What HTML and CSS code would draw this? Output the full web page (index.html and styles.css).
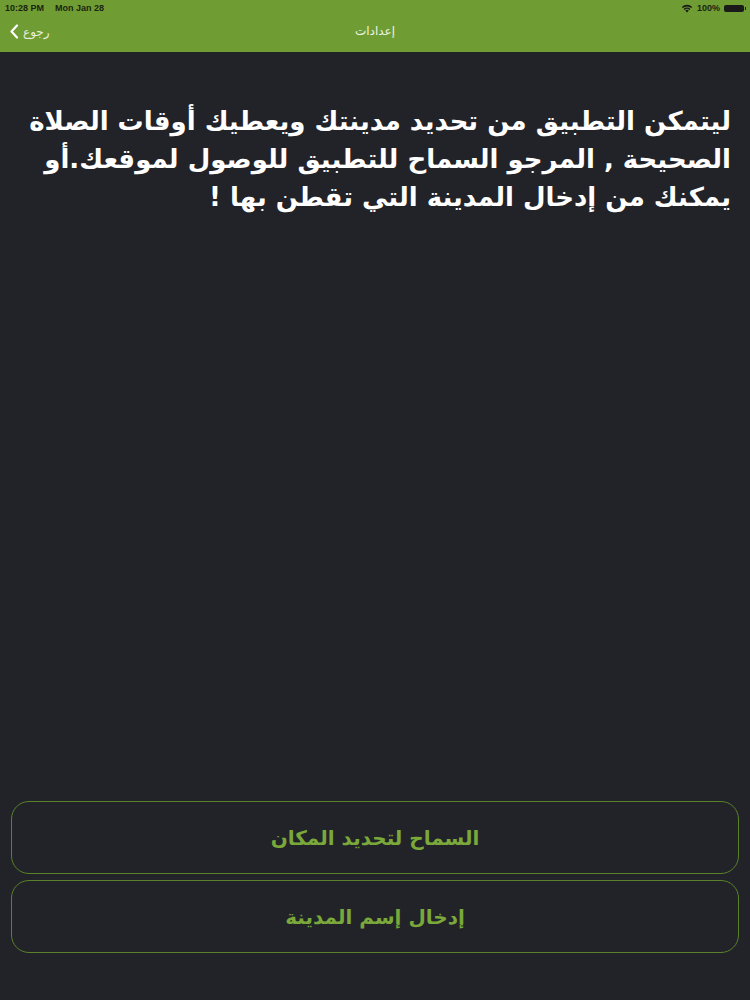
FILE: index.html
```html
<!DOCTYPE html>
<html lang="ar">
<head>
    <meta charset="UTF-8">
    <meta name="viewport" content="width=device-width, initial-scale=1.0">
    <title>إعدادات</title>
    <link rel="stylesheet" href="styles.css">
</head>
<body>
    <div class="app">
        <div class="top-bar">
            <div class="status-bar">
                <div class="status-left">
                    <span>10:28 PM</span>
                    <span>Mon Jan 28</span>
                </div>
                <div class="status-right">
                    <svg class="wifi" width="12" height="9" viewBox="0 0 12 9">
                        <path d="M6 8.6 L4.2 6.6 A2.6 2.6 0 0 1 7.8 6.6 Z" fill="#1a1a1a"/>
                        <path d="M2.6 4.9 A4.9 4.9 0 0 1 9.4 4.9 L8.4 6 A3.5 3.5 0 0 0 3.6 6 Z" fill="#1a1a1a"/>
                        <path d="M0.8 3 A7.4 7.4 0 0 1 11.2 3 L10.2 4.1 A6 6 0 0 0 1.8 4.1 Z" fill="#1a1a1a"/>
                    </svg>
                    <span>100%</span>
                    <span class="battery"></span>
                </div>
            </div>
            <div class="nav-bar">
                <div class="back">
                    <svg width="10" height="15" viewBox="0 0 10 15">
                        <path d="M8 1.5 L2.5 7.5 L8 13.5" fill="none" stroke="#ffffff" stroke-width="2.2" stroke-linecap="round" stroke-linejoin="round"/>
                    </svg>
                    <span>رجوع</span>
                </div>
                <div class="nav-title">إعدادات</div>
            </div>
        </div>

        <div class="content">
            <p class="message">ليتمكن التطبيق من تحديد مدينتك ويعطيك أوقات الصلاة الصحيحة , المرجو السماح للتطبيق للوصول لموقعك.أو يمكنك من إدخال المدينة التي تقطن بها !</p>
        </div>

        <div class="actions">
            <button class="action-btn">السماح لتحديد المكان</button>
            <button class="action-btn">إدخال إسم المدينة</button>
        </div>
    </div>
</body>
</html>
```

FILE: styles.css
```css
html, body {
    margin: 0;
    padding: 0;
    height: 100%;
}
body {
    font-family: "DejaVu Sans", sans-serif;
    background: #222328;
}
.app {
    height: 1000px;
    display: flex;
    flex-direction: column;
}
.top-bar {
    background: #6f9c33;
    height: 52px;
}
.status-bar {
    height: 16px;
    display: flex;
    justify-content: space-between;
    align-items: center;
    padding: 0 6px 0 5px;
    font-family: "Liberation Sans", Arial, sans-serif;
    font-size: 9px;
    font-weight: bold;
    color: #1c2410;
}
.status-left {
    display: flex;
    gap: 11px;
}
.status-right {
    display: flex;
    align-items: center;
    gap: 4px;
}
.battery {
    width: 20px;
    height: 7px;
    background: #1a1a1a;
    border-radius: 2px;
    position: relative;
}
.battery::after {
    content: "";
    position: absolute;
    right: -2px;
    top: 2px;
    width: 1px;
    height: 3px;
    background: #1a1a1a;
}
.nav-bar {
    height: 32px;
    display: flex;
    align-items: center;
    justify-content: center;
    position: relative;
    color: #ffffff;
    font-size: 12px;
}
.back {
    position: absolute;
    left: 9px;
    top: 8px;
    display: flex;
    align-items: center;
    gap: 4px;
    font-size: 12px;
    color: #e8f0dc;
}
.nav-title {
    margin-top: -2px;
    color: #eef4e4;
}
.content {
    flex: 1;
    padding: 50px 19px 0 19px;
}
.message {
    margin: 0;
    direction: rtl;
    text-align: right;
    color: #ffffff;
    font-size: 26px;
    font-weight: bold;
    line-height: 38px;
}
.actions {
    display: flex;
    flex-direction: column;
    gap: 6px;
    padding: 0 11px 47px 11px;
}
.action-btn {
    height: 73px;
    background: transparent;
    border: 1px solid #5a8228;
    border-radius: 18px;
    color: #7aa83a;
    font-family: "DejaVu Sans", sans-serif;
    font-size: 20px;
    font-weight: bold;
    direction: rtl;
    padding: 0;
}
```
